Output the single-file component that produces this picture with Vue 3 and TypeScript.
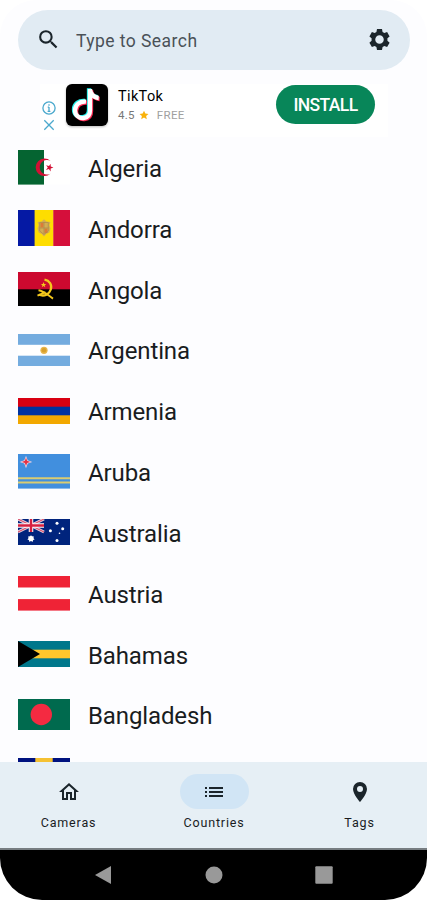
<script setup lang="ts">
interface Country {
  name?: string
  code: string
  height: number
}

const countries: Country[] = [
  { name: 'Algeria', code: 'dz', height: 34.6 },
  { name: 'Andorra', code: 'ad', height: 36.4 },
  { name: 'Angola', code: 'ao', height: 34.6 },
  { name: 'Argentina', code: 'ar', height: 32.5 },
  { name: 'Armenia', code: 'am', height: 26 },
  { name: 'Aruba', code: 'aw', height: 34.6 },
  { name: 'Australia', code: 'au', height: 26 },
  { name: 'Austria', code: 'at', height: 34.6 },
  { name: 'Bahamas', code: 'bs', height: 26 },
  { name: 'Bangladesh', code: 'bd', height: 31 },
  { code: 'bb', height: 34.6 },
]
</script>

<template>
  <div class="screen">
    <header class="search">
      <svg class="icon" viewBox="0 0 24 24">
        <path d="M15.5 14h-.79l-.28-.27A6.47 6.47 0 0 0 16 9.5 6.5 6.5 0 1 0 9.5 16c1.61 0 3.09-.59 4.23-1.57l.27.28v.79l5 4.99L20.49 19zm-6 0a4.5 4.5 0 1 1 0-9 4.5 4.5 0 0 1 0 9z" />
      </svg>
      <span class="hint">Type to Search</span>
      <svg class="icon" viewBox="0 0 24 24">
        <path fill-rule="evenodd" d="M9.6 2h4.8l.55 2.75 1.7 1 2.65-.9 2.4 4.15-2.1 1.85v2.3l2.1 1.85-2.4 4.15-2.65-.9-1.7 1L14.4 22H9.6l-.55-2.75-1.7-1-2.65.9L2.3 15l2.1-1.85v-2.3L2.3 9l2.4-4.15 2.65.9 1.7-1zM12 7.9a4.100 4.100 0 1 0 0 8.200 4.100 4.100 0 0 0 0-8.200z" />
      </svg>
    </header>

    <section class="ad">
      <div class="choices">
        <svg viewBox="0 0 14 14">
          <circle cx="7" cy="7" r="6.1" />
          <path d="M7 6v4.5M7 3.3v1.5M5.700 6.200H7M5.600 10.300h2.800" />
        </svg>
        <svg viewBox="0 0 14 14"><path d="M2.300 2.300l9.400 9.400M11.700 2.300l-9.400 9.400" /></svg>
      </div>
      <svg class="app-logo" viewBox="0 0 42 42">
        <rect width="42" height="42" rx="6" />
        <g fill="none" stroke-width="4.300">
          <path stroke="#25f4ee" d="M20 17.700c-6-.7-11 3-11 8.500s4.500 8.300 8.500 7.800 6.500-3 6.500-7.500V5c0 4.500 3.500 8.700 8.700 9" transform="translate(-1 -.8)" />
          <path stroke="#fe2c55" d="M20 17.700c-6-.7-11 3-11 8.500s4.500 8.300 8.500 7.800 6.500-3 6.500-7.500V5c0 4.500 3.500 8.700 8.700 9" transform="translate(1 1)" />
          <path stroke="#fff" d="M20 17.700c-6-.7-11 3-11 8.500s4.500 8.300 8.500 7.800 6.500-3 6.500-7.500V5c0 4.500 3.500 8.700 8.700 9" />
        </g>
      </svg>
      <div class="app-info">
        <div class="app-name">TikTok</div>
        <div class="app-meta">
          <span>4.5</span>
          <svg viewBox="0 0 24 24"><path d="M12 1.500l3.200 7 7.600.8-5.700 5.100 1.600 7.500-6.700-3.800-6.700 3.800 1.600-7.500L1.200 9.300l7.600-.8z" /></svg>
          <span class="price">FREE</span>
        </div>
      </div>
      <button class="install">INSTALL</button>
    </section>

    <main class="list">
      <div v-for="c in countries" :key="c.code" class="row">
        <svg class="flag" :viewBox="`0 0 52 ${c.height}`" :style="{ height: c.height + 'px' }">
          <g v-if="c.code === 'dz'">
            <rect width="52" height="34.6" fill="#fff" />
            <rect width="26" height="34.6" fill="#056431" />
            <path fill="#d21034" d="M32.500 10.900a8.800 8.800 0 1 0 0 12.800 7.300 7.300 0 1 1 0-12.800z" />
            <path fill="#d21034" d="M32.700 13.800l-1.700 2.300-2.900-.9 1.700 2.400-1.800 2.300 2.900-.8 1.700 2.400.1-2.900 2.700-1-2.700-1z" />
          </g>
          <g v-else-if="c.code === 'ad'">
            <rect width="17" height="36.4" fill="#0519a4" />
            <rect x="16.600" width="19" height="36.4" fill="#fedd00" />
            <rect x="35.300" width="16.700" height="36.4" fill="#d50f3b" />
            <path fill="#d3ad54" d="M19.500 12l4-.4L26 9.300l2.500 2.300 4 .4-1.200 3 1.200 3.500-1.200 4-3 1.500L26 26.500l-2.300-2.500-3-1.500-1.200-4 1.200-3.500z" />
            <path fill="#dd7a37" d="M22.500 13H25.500v4.500h-3zM26.500 18.500h3v4.500h-3z" />
            <path stroke="#a98a4c" fill="none" d="M21.700 12.500h8.600v8.500L26 24.500 21.700 21zM26 12v12M21.700 18h8.600" stroke-width=".7" />
          </g>
          <g v-else-if="c.code === 'ao'">
            <rect width="52" height="34.6" />
            <rect width="52" height="17.3" fill="#cc092f" />
            <g fill="none" stroke="#f4c81c" stroke-width="1.900">
              <path d="M26.500 7.700c5 .8 7.800 5.200 6.300 9.800s-6.300 7.400-11.700 5.300" stroke-width="2.300" />
              <path d="M20.500 18.300c5 .7 9 4.500 14.500 8.300M19.500 23.700l8-3.500" />
            </g>
            <path fill="#f4c81c" d="M25.500 10l.8 1.900 2 .1-1.600 1.300.6 2-1.800-1.200-1.700 1.200.6-2-1.600-1.300 2-.1z" />
          </g>
          <g v-else-if="c.code === 'ar'">
            <rect width="52" height="32.5" fill="#74acdf" />
            <rect y="10.800" width="52" height="10.900" fill="#fff" />
            <circle cx="26" cy="16.300" r="3.600" fill="#e9b64d" />
            <circle cx="26" cy="16.300" r="2.300" fill="#d9a02c" />
          </g>
          <g v-else-if="c.code === 'am'">
            <rect width="52" height="26" fill="#f2a800" />
            <rect width="52" height="17.3" fill="#0033a0" />
            <rect width="52" height="8.7" fill="#d90012" />
          </g>
          <g v-else-if="c.code === 'aw'">
            <rect width="52" height="34.6" fill="#418fde" />
            <path stroke="#d9cc72" stroke-width="2" d="M0 24.200h52M0 28.500h52" />
            <path fill="#f3d4e1" d="M8 1.700l1.700 4.500 4.600 1.700-4.600 1.700L8 14.200 6.300 9.600 1.700 7.900l4.600-1.700z" />
            <path fill="#e23245" d="M8 3.800l1.100 3 3.100 1.100-3.100 1.100L8 12.100 6.900 9 3.800 7.900l3.100-1.100z" />
          </g>
          <g v-else-if="c.code === 'au'">
            <rect width="52" height="26" fill="#00247d" />
            <path stroke="#e7cbd9" stroke-width="3" d="M0 0l26 13M26 0L0 13" />
            <path stroke="#d8415c" stroke-width="1" d="M0 0l26 13M26 0L0 13" />
            <path stroke="#fff" stroke-width="4.500" d="M13 0v13M0 6.500h26" />
            <path stroke="#d6203f" stroke-width="2.500" d="M13 0v13M0 6.500h26" />
            <g fill="#fff">
              <path d="M13 16l.9 1.800 2-.5-.8 1.900 1.600 1.200-1.900.6v2L13 21.800 11.200 23v-2l-1.900-.6 1.600-1.200-.8-1.900 2 .5z" />
              <circle cx="13" cy="19.600" r="2.600" />
              <circle cx="32.400" cy="11.700" r="1.500" />
              <circle cx="39" cy="4.300" r="1.500" />
              <circle cx="44.700" cy="9.700" r="1.500" />
              <circle cx="39" cy="21.600" r="1.500" />
              <circle cx="41.500" cy="14.300" r=".8" />
            </g>
          </g>
          <g v-else-if="c.code === 'at'">
            <rect width="52" height="34.6" fill="#ef2336" />
            <rect y="11.500" width="52" height="11.600" fill="#fff" />
          </g>
          <g v-else-if="c.code === 'bs'">
            <rect width="52" height="26" fill="#00778b" />
            <rect y="8.700" width="52" height="8.600" fill="#ffc72c" />
            <path d="M0 0l22 13L0 26z" />
          </g>
          <g v-else-if="c.code === 'bd'">
            <rect width="52" height="31" fill="#006a4e" />
            <circle cx="23.300" cy="15.500" r="10.700" fill="#f42a41" />
          </g>
          <g v-else>
            <rect width="52" height="34.6" fill="#00127f" />
            <rect x="17.300" width="17.400" height="34.6" fill="#f5c132" />
          </g>
        </svg>
        <span v-if="c.name" class="country">{{ c.name }}</span>
      </div>
    </main>

    <nav class="tabs">
      <div class="tab">
        <span class="pill">
          <svg class="icon" viewBox="0 0 24 24"><path d="M12 5.690l5 4.500V18h-2v-6H9v6H7v-7.810zM12 3L2 12h3v8h6v-6h2v6h6v-8h3z" /></svg>
        </span>
        <span>Cameras</span>
      </div>
      <div class="tab selected">
        <span class="pill">
          <svg class="icon" viewBox="0 0 24 24"><path d="M3 13h2v-2H3zm0 4h2v-2H3zm0-8h2V7H3zm4 4h14v-2H7zm0 4h14v-2H7zM7 7v2h14V7z" /></svg>
        </span>
        <span>Countries</span>
      </div>
      <div class="tab">
        <span class="pill">
          <svg class="icon" viewBox="0 0 24 24"><path d="M12 2a7 7 0 0 0-7 7c0 5.250 7 13 7 13s7-7.750 7-13a7 7 0 0 0-7-7zm0 10a3 3 0 1 1 0-6 3 3 0 0 1 0 6z" /></svg>
        </span>
        <span>Tags</span>
      </div>
    </nav>

    <footer class="system">
      <svg viewBox="0 0 18 20"><path d="M16 1v18L0 10z" /></svg>
      <svg viewBox="0 0 18 20"><circle cx="9" cy="10" r="8.500" /></svg>
      <svg viewBox="0 0 18 20"><rect x=".3" y="1.300" width="17.400" height="17.400" rx="1" /></svg>
    </footer>
  </div>
</template>

<style>
body {
  background: #fff;
}
</style>

<style scoped>
.screen {
  display: flex;
  flex-direction: column;
  width: 427px;
  height: 900px;
  overflow: hidden;
  box-sizing: border-box;
  background: #fdfdff;
  border-radius: 36px 36px 42px 42px;
  font-family: Roboto, sans-serif;
  color: #191c1e;
}
.icon {
  width: 25px;
  height: 25px;
  flex: none;
  fill: #1b252b;
}
.search {
  display: flex;
  align-items: center;
  flex: none;
  height: 60px;
  margin: 9.500px 17px 0 18px;
  padding: 0 18px;
  box-sizing: border-box;
  border-radius: 30px;
  background: #e1ebf3;
}
.hint {
  flex: 1;
  margin-left: 15px;
  padding-top: 2px;
  font-size: 17.500px;
  letter-spacing: 0.450px;
  color: #4a5157;
}
.ad {
  display: flex;
  align-items: flex-start;
  flex: none;
  height: 53.500px;
  margin: 14px 39px 0 40px;
  padding-left: 2px;
  background: #fff;
  box-sizing: border-box;
}
.choices {
  display: flex;
  flex-direction: column;
  gap: 3px;
  margin-top: 17px;
}
.choices svg {
  width: 14px;
  height: 14px;
  fill: none;
  stroke: #4ba9cd;
  stroke-width: 1.300;
}
.app-logo {
  width: 42px;
  height: 42px;
  margin: 0.500px 0 0 10px;
  filter: drop-shadow(0 1px 1px #0004);
}
.app-info {
  flex: 1;
  margin: 4px 0 0 10px;
}
.app-name {
  font-size: 14.500px;
  line-height: 18px;
  letter-spacing: 0.350px;
  color: #000;
}
.app-meta {
  display: flex;
  align-items: center;
  font-size: 11.500px;
  line-height: 18px;
  letter-spacing: 0.300px;
  color: #777;
}
.app-meta svg {
  width: 10px;
  height: 10px;
  margin: 0 8px 0 4px;
  fill: #f9b20b;
}
.price {
  color: #a0a0a0;
}
.install {
  width: 99px;
  height: 39px;
  margin: 1.500px 13px 0 0;
  padding: 0;
  border: 0;
  border-radius: 20px;
  background: #088659;
  color: #fff;
  font: 500 17.500px Roboto, sans-serif;
  letter-spacing: -0.600px;
}
.list {
  flex: 1;
  min-height: 0;
  overflow: hidden;
}
.row {
  display: flex;
  align-items: center;
  height: 60.830px;
  padding-left: 18px;
}
.flag {
  width: 52px;
  flex: none;
}
.country {
  margin-left: 18px;
  padding-top: 3px;
  font-size: 24px;
  letter-spacing: -0.120px;
}
.tabs {
  display: flex;
  flex: none;
  height: 86px;
  box-sizing: border-box;
  padding: 12px 0 0 0;
  background: #e6eff5;
}
.tab {
  display: flex;
  flex-direction: column;
  align-items: center;
  width: 69px;
  margin-left: 34px;
  font-size: 12.500px;
  line-height: 17px;
  letter-spacing: 0.850px;
}
.tab + .tab {
  margin-left: 76.500px;
}
.pill {
  display: flex;
  align-items: center;
  justify-content: center;
  width: 69px;
  height: 35px;
  margin-bottom: 5px;
  border-radius: 18px;
}
.tab .icon {
  width: 24px;
  height: 24px;
}
.selected .pill {
  background: #d1e5f5;
}
.system {
  display: flex;
  flex: none;
  align-items: center;
  justify-content: center;
  gap: 92px;
  height: 52px;
  box-sizing: border-box;
  border-top: 2px solid #777d81;
  background: #000;
}
.system svg {
  width: 18px;
  height: 20px;
  fill: #999;
}
</style>
